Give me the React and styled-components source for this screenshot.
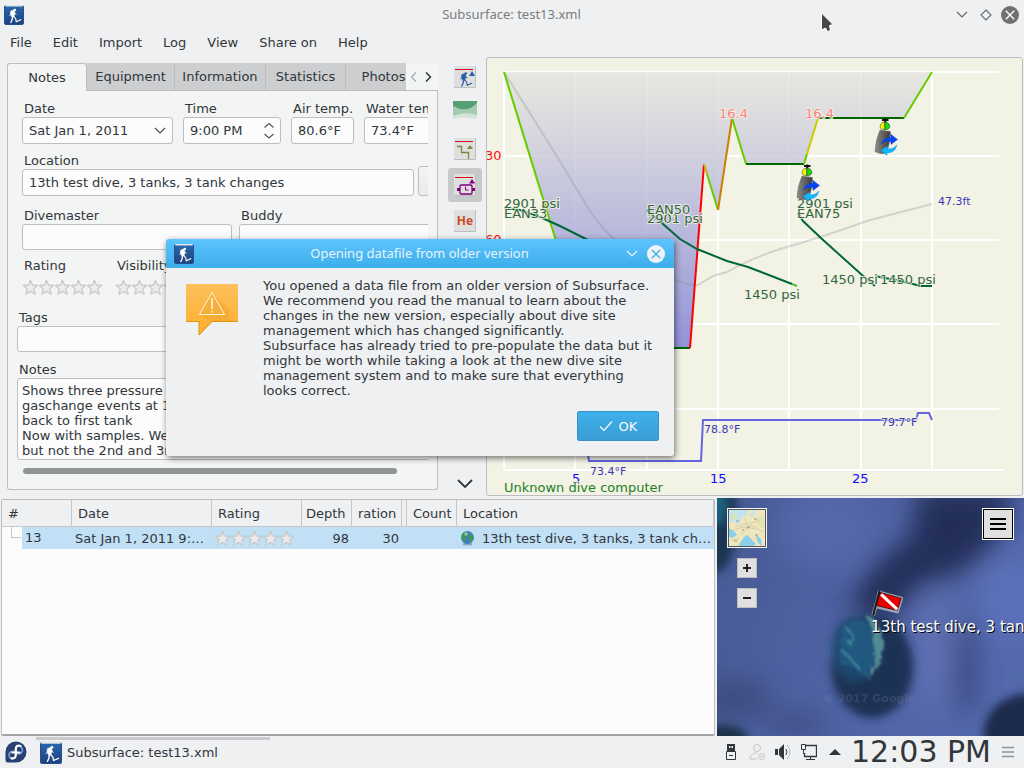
import React from "react";
import styled, { createGlobalStyle } from "styled-components";

const Global = createGlobalStyle`
  * { box-sizing: border-box; }
  body {
    margin: 0;
    background: #eff0f1;
    color: #31363b;
    font: 13px/15px "DejaVu Sans", Verdana, sans-serif;
  }
  button, input, select, textarea { font: inherit; color: inherit; }
`;

/* ---------- page frame ---------- */
const Page = styled.div`
  position: relative;
  display: flex;
  flex-direction: column;
  min-height: 100vh;
  overflow: hidden;
`;
const TitleBar = styled.header`
  display: flex;
  align-items: center;
  gap: 6px;
  height: 29px;
  padding: 0 5px 0 4px;
`;
const TitleText = styled.h1`
  flex: 1;
  margin: 0;
  padding: 0 0 2px 46px;
  text-align: center;
  font: 13px/18px "Noto Sans", sans-serif;
  color: ${(p) => p.$color || "#7b7d80"};
`;
const IconButton = styled.button`
  display: flex;
  align-items: center;
  justify-content: center;
  width: 18px;
  height: 18px;
  padding: 0;
  border: 0;
  background: none;
`;
const MenuBar = styled.nav`
  display: flex;
  gap: 1px;
  height: 28px;
`;
const MenuItem = styled.button`
  padding: 0 10px 2px;
  border: 0;
  background: none;
`;
const Upper = styled.main`
  display: flex;
  align-items: stretch;
  padding-right: 1px;
`;
const Lower = styled.section`
  flex: 1;
  display: grid;
  grid-template-columns: minmax(0, 7fr) minmax(0, 3fr);
  margin-top: 2px;
`;

/* ---------- notes panel ---------- */
const NotesPanel = styled.section`
  flex: 0 0 431px;
  min-width: 0;
  width: 431px;
  display: flex;
  flex-direction: column;
  margin: 6px 0 6px 7px;
`;
const TabBar = styled.div`
  display: flex;
  height: 28px;
`;
const TabStrip = styled.div`
  flex: 1;
  min-width: 0;
  display: flex;
  overflow: hidden;
`;
const Tab = styled.button`
  flex: 0 0 ${(p) => p.$w}px;
  padding: 0;
  border: 1px solid #bcbebf;
  border-width: ${(p) => (p.$active ? "1px 1px 0 1px" : "0 1px 1px 0")};
  border-radius: ${(p) => (p.$active ? "3px 3px 0 0" : "0")};
  background: ${(p) => (p.$active ? "#f3f5f4" : "#cdced0")};
`;
const TabScroll = styled.div`
  display: flex;
  align-items: center;
  justify-content: flex-start;
  width: 32px;
  background: #f3f5f4;
  border-bottom: 1px solid #bcbebf;
`;
const ArrowButton = styled(IconButton)`
  width: 15px;
`;
const Pane = styled.div`
  flex: 1;
  min-width: 0;
  border: 1px solid #bcbebf;
  border-top: 0;
  border-radius: 0 0 3px 3px;
  background: #f3f5f4;
  padding: 10px 9px 14px 9px;
`;
const Form = styled.form`
  overflow: hidden;
  display: flex;
  flex-direction: column;
`;
const FormRow = styled.div`
  display: flex;
  align-items: flex-end;
  gap: ${(p) => p.$gap || 10}px;
  margin-top: ${(p) => p.$top || 0}px;
  padding-left: ${(p) => (p.$flush ? 0 : 5)}px;
`;
const Field = styled.label`
  flex: 0 0 ${(p) => p.$w}px;
  display: flex;
  flex-direction: column;
`;
const Caption = styled.span`
  height: 16px;
  padding-left: 2px;
  white-space: nowrap;
`;
const Box = styled.span`
  display: flex;
  align-items: center;
  height: ${(p) => p.$h || 27}px;
  padding: 0 6px;
  border: 1px solid #bcbebf;
  border-radius: 3px;
  background: #fcfcfc;
`;
const TextInput = styled.input`
  flex: 1;
  min-width: 0;
  width: 100%;
  padding: 0;
  border: 0;
  outline: 0;
  background: none;
`;
const Select = styled.select`
  flex: 1;
  min-width: 0;
  padding: 0;
  border: 0;
  appearance: none;
  background: none;
`;
const NotesArea = styled.textarea`
  height: 82px;
  padding: 4px 4px 0;
  border: 1px solid #bcbebf;
  border-radius: 3px;
  background: #fcfcfc;
  line-height: 15px;
  white-space: pre;
  overflow: hidden;
  resize: none;
  display: block;
`;
const EditButton = styled.button`
  flex: 0 0 30px;
  height: 30px;
  border: 1px solid #bcbebf;
  border-radius: 3px;
  background: linear-gradient(#f3f4f4, #e9eaeb);
`;
const StarBox = styled.span`
  display: flex;
  padding-top: 5px;
`;
const ScrollThumb = styled.div`
  width: 374px;
  height: 6px;
  margin: 8px 0 0 6px;
  border-radius: 3px;
  background: #919497;
`;

/* ---------- profile tools ---------- */
const ToolColumn = styled.aside`
  flex: 0 0 48px;
  display: flex;
  flex-direction: column;
  align-items: center;
  gap: 2px;
  padding: 3px 4px 4px 10px;
`;
const ToolButton = styled.button`
  display: flex;
  align-items: center;
  justify-content: center;
  width: 34px;
  height: 34px;
  padding: 0;
  border: 0;
  border-radius: 3px;
  background: ${(p) => (p.$active ? "#c8c9cb" : "none")};
`;
const MoreButton = styled(ToolButton)`
  height: 18px;
  margin-top: auto;
`;
const ProfileBox = styled.section`
  flex: 1;
  min-width: 0;
  border: 1px solid #bcbebf;
  border-radius: 3px;
  background: #f2f2e5;
  svg { display: block; width: 100%; }
`;

/* ---------- dive list ---------- */
const ListBox = styled.div`
  margin: 1px 2px 0 1px;
  border: 1px solid #bcbebf;
  border-bottom: 2px solid #a3a4a6;
  border-radius: 2px;
  background: #fcfcfc;
`;
const DiveTable = styled.table`
  width: 100%;
  table-layout: fixed;
  border-collapse: separate;
  border-spacing: 0;
`;
const Th = styled.th`
  height: 27px;
  padding: 0 0 0 ${(p) => p.$pad ?? 6}px;
  border-right: 1px solid #c6c7c9;
  border-bottom: 1px solid #c6c7c9;
  background: #eff0f1;
  font-weight: normal;
  text-align: left;
  white-space: nowrap;
  overflow: hidden;
`;
const Td = styled.td`
  height: 22px;
  padding: 0 ${(p) => p.$end ?? 3}px 0 ${(p) => p.$pad ?? 3}px;
  background: ${(p) => (p.$plain ? "none" : "#c1dff5")};
  text-align: ${(p) => p.$align || "left"};
  white-space: nowrap;
  overflow: hidden;
  text-overflow: ellipsis;
`;
const TreeCell = styled.div`
  display: flex;
  height: 22px;
  line-height: 22px;
`;
const Branch = styled.span`
  width: 10px;
  height: 11px;
  margin-left: 9px;
  border: 1px solid #c3c4c6;
  border-width: 0 0 1px 1px;
`;
const DiveNumber = styled.span`
  flex: 1;
  margin-left: 1px;
  padding-left: 3px;
  background: #c1dff5;
`;
const Place = styled.div`
  display: flex;
  align-items: center;
  gap: 7px;
  svg { flex: none; }
`;
const PlaceName = styled.span`
  overflow: hidden;
  text-overflow: ellipsis;
`;

/* ---------- map ---------- */
const MapBox = styled.section`
  position: relative;
  display: flex;
  justify-content: space-between;
  align-items: flex-start;
  padding: 10px;
  overflow: hidden;
  background: #50629f;
`;
const MapPicture = styled.svg`
  position: absolute;
  inset: 0;
  width: 100%;
  height: 100%;
`;
const MapTools = styled.div`
  position: relative;
  display: flex;
  flex-direction: column;
  align-items: center;
  gap: 10px;
`;
const MapThumb = styled.button`
  width: 40px;
  height: 40px;
  padding: 1px;
  border: 1px solid #f4f4f4;
  background: #555;
  svg { display: block; }
`;
const ZoomButton = styled.button`
  display: flex;
  align-items: center;
  justify-content: center;
  width: 20px;
  height: 20px;
  padding: 0;
  border: 1px solid #bdbdbd;
  background: #e0e0e0;
`;
const MapMenu = styled(ZoomButton)`
  position: relative;
  width: 30px;
  height: 30px;
  margin: 1px;
  border: 1px solid #000;
  outline: 1px solid #fff;
`;

/* ---------- dialog ---------- */
const Dialog = styled.div`
  position: absolute;
  left: 166px;
  top: 239px;
  width: 508px;
  border-radius: 3px;
  background: #eff0f1;
  box-shadow: 1px 2px 6px rgba(0, 0, 0, 0.55);
`;
const DialogTitle = styled.div`
  display: flex;
  align-items: center;
  gap: 6px;
  height: 29px;
  padding: 0 9px 0 8px;
  border-radius: 3px 3px 0 0;
  background: linear-gradient(#5cc4ff, #3daee9);
`;
const DialogHeading = styled(TitleText)`
  padding-left: 22px;
`;
const DialogBody = styled.div`
  display: flex;
  gap: 25px;
  padding: 10px 15px 0 20px;
`;
const BubbleSlot = styled.div`
  padding-top: 6px;
`;
const Message = styled.p`
  flex: 1;
  margin: 0;
`;
const DialogButtons = styled.div`
  display: flex;
  justify-content: flex-end;
  padding: 13px 15px 15px;
`;
const OkButton = styled.button`
  display: flex;
  align-items: center;
  justify-content: center;
  gap: 6px;
  width: 82px;
  height: 30px;
  border: 1px solid #3693c8;
  border-radius: 2px;
  background: linear-gradient(#3fb0ec, #3a9dd4);
  color: #fcfcfc;
`;

/* ---------- taskbar ---------- */
const TaskBar = styled.footer`
  display: flex;
  align-items: center;
  height: 32px;
  padding: 0 10px 0 5px;
  background: #eff0f2;
`;
const TaskButton = styled.button`
  display: flex;
  align-items: center;
  gap: 5px;
  width: 234px;
  height: 32px;
  margin-left: 9px;
  padding: 0 4px;
  border: 1px solid transparent;
  border-width: 1px 0 0;
  background: linear-gradient(#c9cacd 3px, transparent 3px) padding-box;
`;
const Tray = styled.div`
  display: flex;
  align-items: center;
  gap: 10px;
  margin-left: auto;
`;
const Clock = styled.time`
  margin: 0 11px 0 8px;
  font-size: 30px;
  line-height: 32px;
`;
const Cursor = styled.svg`
  position: absolute;
  left: 820px;
  top: 12px;
  pointer-events: none;
`;

/* ---------- drawings ---------- */
const Figure = ({ color }) => (
  <g fill="none" stroke={color} strokeLinecap="round" strokeLinejoin="round">
    <circle cx="10.8" cy="5" r="1.3" fill={color} stroke="none" />
    <path d="M7 6 L9.5 5 L11 8 L9.8 12 L7.6 11.5 L6.5 8.5 Z" fill={color} strokeWidth=".6" />
    <path d="M10 7 L12 9.5 M7.5 8 L5.8 10.5" strokeWidth=".9" />
    <path d="M8.4 11 L8.2 14.5 L6.8 17.5" strokeWidth="1.3" />
    <path d="M9.4 11 L11.8 14 L12.3 16.8 L16.8 14.8" strokeWidth="1.2" />
  </g>
);

const AppIcon = ({ size = 20 }) => (
  <svg width={size} height={size} viewBox="0 0 20 20" aria-hidden="true">
    <defs>
      <linearGradient id="appBlue" x1="0" y1="0" x2="0" y2="1">
        <stop offset="0" stopColor="#2b67ac" />
        <stop offset="1" stopColor="#1d4180" />
      </linearGradient>
    </defs>
    <rect x=".5" y=".5" width="19" height="19" rx="1.5" fill="url(#appBlue)" stroke="#24508f" />
    <rect x="1" y="0" width="18" height="1.6" rx=".8" fill="#dfe6e6" />
    <Figure color="#fff" />
  </svg>
);

const Chevron = ({ w = 12, h = 7, color = "#4d5256", stroke = 1.2 }) => (
  <svg width={w} height={h} viewBox={`0 0 ${w} ${h}`} fill="none" stroke={color} strokeWidth={stroke}>
    <path d={`M1 1 L${w / 2} ${h - 1} L${w - 1} 1`} />
  </svg>
);

const CloseIcon = ({ disc, cross }) => (
  <svg width="18" height="18" viewBox="0 0 18 18">
    <circle cx="9" cy="9" r="9" fill={disc} />
    <path d="M4.8 4.8 L13.2 13.2 M13.2 4.8 L4.8 13.2" stroke={cross} strokeWidth="1.3" />
  </svg>
);

const Stars = ({ label }) => (
  <svg width="81" height="17" viewBox="0 0 81 17" role="img" aria-label={label}>
    {[0, 1, 2, 3, 4].map((i) => (
      <path
        key={i}
        transform={`translate(${i * 16} 0)`}
        d="M8.5 1.3 L10.4 6 L15.8 6.3 L11.8 9.8 L13.2 15.3 L8.5 12.4 L3.8 15.3 L5.2 9.8 L1.2 6.3 L6.6 6 Z"
        fill="#ececec"
        stroke="#cacaca"
        strokeWidth="1.3"
        strokeLinejoin="round"
      />
    ))}
  </svg>
);

const ToolFrame = ({ children }) => (
  <svg width="24" height="24" viewBox="0 0 24 24">
    <rect x="1" y="1" width="22" height="22" fill="#dfdfdf" />
    <path d="M1.5 22.5 H22.5 V1" fill="none" stroke="#bdbdbd" />
    {children}
  </svg>
);
const RedLine = () => <rect x="2" y="4" width="18" height="1" fill="#d4001c" />;

const Tank = ({ dx = 0, dy = 0 }) => (
  <g transform={`translate(${dx} ${dy})`}>
    <path d="M802 176 L812.5 177.5 Q812 190 808.5 199 Q803 201 797 197.5 Q797.500 186 802 176Z" fill="url(#steel)" stroke="#777" strokeWidth=".6" />
    <path d="M804 166 H810.500 M807.300 164.500 V169" stroke="#111" strokeWidth="2" />
    <path d="M806.800 168 A4.700 4.700 0 0 0 802.200 173.500 Q803 176 806.800 175.500Z" fill="#f5f500" stroke="#222" strokeWidth=".5" />
    <path d="M806.800 168 A4.700 4.700 0 0 1 811.700 173.500 Q811 176 806.800 175.500Z" fill="#12dd12" stroke="#222" strokeWidth=".5" />
    <path d="M803 190 Q806 182.500 813 183.500 L812.500 180 L819.500 185.500 L813 190.500 L812.800 187.500 Q807 186 803 190Z" fill="#0646f2" stroke="#053ac0" strokeWidth=".4" />
    <path d="M819 191 Q817 199 809 199 L809 201.500 L803 196.500 L809.500 192 L809.800 195 Q815 195.500 819 191Z" fill="#12b6fa" stroke="#0b88dc" strokeWidth=".4" />
  </g>
);

const profilePoints =
  "504,72 589,348 690,348 704,164 718,210 732,118 746,164 804,164 818,118 904,118 932,72";
const segments = [
  ["504,72 589,348", "#66cc00"],
  ["589,348 690,348", "#006600"],
  ["690,348 704,164", "#ff0000"],
  ["704,164 707,174", "#ccb000"],
  ["707,174 718,210", "#66cc00"],
  ["718,210 732,118", "#cc8000"],
  ["732,118 746,164", "#66cc00"],
  ["746,164 804,164", "#006600"],
  ["804,164 807,154", "#66cc00"],
  ["807,154 818,118", "#cccc00"],
  ["818,118 904,118", "#006600"],
  ["904,118 932,72", "#66cc00"],
];
const pressureLines = [
  "504,208 520,210 540,217 560,226 586,239 640,262",
  "647,210 663,224 680,239 697,249 727,261 748,267 792,284",
  "798,213 803,221 822,239 862,275 875,286",
  "875,276 900,281 913,284 920,286 932,286",
];
const chartTexts = [
  [504, 208, "2901 psi", "gas"],
  [504, 218, "EAN33", "gas"],
  [647, 223, "2901 psi", "gas"],
  [647, 214, "EAN50", "gas"],
  [797, 208, "2901 psi", "gas"],
  [797, 218, "EAN75", "gas"],
  [744, 299, "1450 psi", "gas"],
  [822, 284, "1450 psi", "gas"],
  [880, 284, "1450 psi", "gas"],
  [719, 118, "16.4", "depth"],
  [805, 118, "16.4", "depth"],
  [938, 205, "47.3ft", "small"],
  [590, 475, "73.4°F", "small"],
  [704, 433, "78.8°F", "small"],
  [881, 426, "79.7°F", "small"],
  [485, 160, "30", "axisY"],
  [485, 244, "60", "axisY"],
  [572, 483, "5", "axisX"],
  [710, 483, "15", "axisX"],
  [852, 483, "25", "axisX"],
  [504, 492, "Unknown dive computer", "computer"],
];
const inks = {
  gas: "#33663d",
  depth: "#ff8080",
  small: "#3a3ab4",
  axisY: "#ff1010",
  axisX: "#0a0aff",
  computer: "#1c801c",
};
const ChartText = styled.text`
  font-size: ${(p) => (p.$kind === "small" ? 11 : 13)}px;
  fill: ${(p) => inks[p.$kind]};
  stroke: #f2f2e5;
  stroke-width: 2px;
  stroke-opacity: 0.8;
  paint-order: stroke;
`;

const Profile = () => (
  <svg viewBox="487 58 535 437" role="img" aria-label="Dive profile">
    <defs>
      <linearGradient id="water" x1="0" y1="0" x2="0" y2="1">
        <stop offset="0" stopColor="#e4e4df" stopOpacity=".75" />
        <stop offset=".3" stopColor="#c8c8dc" stopOpacity=".8" />
        <stop offset="1" stopColor="#8383d8" stopOpacity=".87" />
      </linearGradient>
      <linearGradient id="steel">
        <stop offset="0" stopColor="#8d8d8d" />
        <stop offset=".4" stopColor="#6b6b6b" />
        <stop offset="1" stopColor="#3a3a3a" />
      </linearGradient>
    </defs>
    <g stroke="#fff" strokeWidth="2">
      {[72, 156, 240, 324, 409].map((y) => <path key={y} d={`M504 ${y} H999`} />)}
      <path d="M504 470 H1004" />
      {[504, 575, 647, 718, 789, 861, 932].map((x) => <path key={x} d={`M${x} 72 V470`} />)}
    </g>
    <polygon points={profilePoints} fill="url(#water)" />
    <path
      d="M504 72 L553 150 L590 211 Q602 228 613 238 Q645 272 672 278 Q686 286 698 285 L713 276 L727 272 Q750 259 780 249 Q820 238 867 221 Q900 212 932 204"
      fill="none" stroke="#808080" strokeOpacity=".27" strokeWidth="2"
    />
    {segments.map(([pts, color]) => (
      <polyline key={pts} points={pts} fill="none" stroke={color} strokeWidth="2" />
    ))}
    {pressureLines.map((pts) => (
      <polyline key={pts} points={pts} fill="none" stroke="#006838" strokeWidth="2" />
    ))}
    <path d="M792 284 L797 286" stroke="#55c030" strokeWidth="2" />
    <path d="M586 440 L589 461 H701 L703 420 H916 L918 413 H929 L932 420" fill="none" stroke="#6565e2" strokeWidth="2" />
    {chartTexts.map(([x, y, text, kind]) => (
      <ChartText key={`${x}-${y}`} x={x} y={y} $kind={kind}>{text}</ChartText>
    ))}
    <Tank />
    <Tank dx={78} dy={-46} />
  </svg>
);

const MapLabel = styled.text`
  font-size: 15px;
  fill: ${(p) => p.$fill};
`;
const Watermark = styled.text`
  font-size: 11px;
  font-weight: bold;
  fill: #8a92a8;
  opacity: 0.2;
`;

const Satellite = () => (
  <MapPicture viewBox="0 0 307 237" preserveAspectRatio="xMidYMid slice" role="img" aria-label="Dive site map">
    <defs>
      <linearGradient id="sea" x1="0" y1="0" x2="1" y2=".3">
        <stop offset="0" stopColor="#465a93" />
        <stop offset=".4" stopColor="#4d60a0" />
        <stop offset="1" stopColor="#5468ac" />
      </linearGradient>
      <filter id="soft" x="-50%" y="-50%" width="200%" height="200%"><feGaussianBlur stdDeviation="13" /></filter>
      <filter id="edge" x="-30%" y="-30%" width="160%" height="160%"><feGaussianBlur stdDeviation="4" /></filter>
      <filter id="reef" x="-10%" y="-10%" width="120%" height="120%">
        <feTurbulence type="fractalNoise" baseFrequency=".13" numOctaves="3" seed="4" />
        <feDisplacementMap in="SourceGraphic" scale="9" />
        <feGaussianBlur stdDeviation="1.2" />
      </filter>
    </defs>
    <rect width="307" height="237" fill="url(#sea)" />
    <g filter="url(#soft)">
      <ellipse cx="110" cy="30" rx="50" ry="40" fill="#5468aa" />
      <ellipse cx="218" cy="150" rx="20" ry="60" fill="#5f70b2" />
      <ellipse cx="293" cy="100" rx="30" ry="40" fill="#5b71bb" />
      <path d="M200 -10 L300 -10 L275 50 L240 75 L200 90 L170 125 L130 110 L160 62 L195 38Z" fill="#212f58" />
      <ellipse cx="248" cy="170" rx="11" ry="50" fill="#36457c" />
      <ellipse cx="15" cy="200" rx="40" ry="22" fill="#3c4d80" />
      <ellipse cx="80" cy="225" rx="30" ry="12" fill="#3c4d84" />
    </g>
    <g filter="url(#edge)">
      <ellipse cx="0" cy="20" rx="21" ry="54" fill="#1b3453" />
      <ellipse cx="0" cy="5" rx="10" ry="22" fill="#1f6480" />
      <ellipse cx="310" cy="235" rx="44" ry="40" fill="#1c2a4c" />
      <ellipse cx="5" cy="240" rx="26" ry="14" fill="#1d3048" />
      <ellipse cx="155" cy="168" rx="41" ry="51" fill="#1e3055" />
      <ellipse cx="138" cy="150" rx="23" ry="32" fill="#1f4a6e" />
    </g>
    <g filter="url(#reef)">
      <path d="M135 123 Q155 116 160 140 Q162 165 148 178 Q140 168 124 165 Q118 140 135 123Z" fill="#24628a" opacity=".6" />
      <path d="M152 117 Q164 122 166 145 Q165 170 151 182 Q159 160 157 142 Q155 126 149 119Z" fill="#5e979c" opacity=".85" />
      <path d="M123 150 L135 161 L142 171 M128 128 L136 137 L131 146" stroke="#4790a2" strokeWidth="1.5" fill="none" />
    </g>
    <Watermark x="106" y="203">© 2017 Google</Watermark>
    <g stroke="#d8d8d8" strokeWidth="3.500" strokeLinejoin="round" opacity=".65" fill="none">
      <path d="M163 92 L156 117 M162 94 L184 100 L180 113 L159 108Z" />
    </g>
    <path d="M163 94 L184 100 L180 112 L159 107Z" fill="#e80000" stroke="#3a0808" strokeWidth=".8" />
    <path d="M164 96 L180 111" stroke="#fff" strokeWidth="3" />
    <path d="M162.500 92 L156 117" stroke="#171717" strokeWidth="2" />
    <MapLabel x="155" y="134" $fill="#000" aria-hidden="true">13th test dive, 3 tanks, 3 tank changes</MapLabel>
    <MapLabel x="154" y="133" $fill="#fff">13th test dive, 3 tanks, 3 tank changes</MapLabel>
  </MapPicture>
);

const StreetThumb = () => (
  <svg width="36" height="36" viewBox="0 0 36 36">
    <rect width="36" height="36" fill="#eee6bd" />
    <path d="M0 0 H20 L17 6 L13 7 L11 12 L7 15 L6 11 L0 13Z M28 0 L24 6 L20 7 L22 3 L25 0Z" fill="#c5e3ee" />
    <path d="M0 18 L5 21 L8 25 L3 28 L0 27Z M11 33 L15 27 L19 25 L22 29 L27 34 L24 36 H10Z M26 24 L32 29 L33 36 L29 33Z" fill="#8ccfeb" />
    <path d="M3 5 L7 3 L8 9 L4 10Z M27 8 L35 5 V18 L29 15Z" fill="#dfe3b2" />
    <path d="M6 17 L30 11 M12 24 L22 15 L34 22 M16 8 L19 20 M2 30 L10 29 M4 20 L15 17 L27 19" stroke="#cfbf97" strokeWidth=".6" fill="none" />
    <path d="M7 11 H10 M18 17 H21 M25 9 H28 M13 20 H15 M5 31 H8 M26 25 H29" stroke="#888" strokeWidth=".8" />
  </svg>
);

const Globe = () => (
  <svg width="15" height="16" viewBox="0 0 15 16" aria-hidden="true">
    <ellipse cx="7.500" cy="14" rx="5" ry="1.500" fill="#8fa7b8" />
    <circle cx="7.500" cy="7.500" r="6.500" fill="#3f7fc0" />
    <path d="M3 3 Q7 1 8 3 L7 6 L5 8 L6 11 L4 12 Q1 9 2 5Z M9 6 L12 4 Q14 7 13 10 L10 12 L9 9Z" fill="#3f9a4c" />
    <circle cx="6" cy="4" r="1.800" fill="#fff" opacity=".45" />
  </svg>
);

const Bubble = () => (
  <svg width="52" height="52" viewBox="0 0 52 52" aria-hidden="true">
    <defs>
      <linearGradient id="amber" x1="0" y1="0" x2="0" y2="1">
        <stop offset="0" stopColor="#fdc05c" />
        <stop offset="1" stopColor="#fdae2c" />
      </linearGradient>
    </defs>
    <path d="M0 0 H52 V38 H26 L13 51 V38 H0Z" fill="url(#amber)" />
    <path d="M26 8 L43 25 V38 H26 L14 31Z" fill="#e89a22" opacity=".3" />
    <path d="M0 37.500 H13 V51 M52 37.500 H26 L13 51" fill="none" stroke="#e5940f" />
    <path d="M26 8.500 L38.500 30.500 H13.500Z" fill="none" stroke="#fff4d8" />
    <path d="M26 14 V25 M26 26.500 V28.500" stroke="#fff4d8" strokeWidth="1.600" />
  </svg>
);

const Fedora = () => (
  <svg width="22" height="22" viewBox="0 0 22 22" aria-hidden="true">
    <path d="M11 .5 A10.500 10.500 0 1 1 11 21.500 H3 Q.5 21.500 .5 19 V11 A10.500 10.500 0 0 1 11 .5Z" fill="#294172" />
    <path d="M12 12.500 Q17 13.500 17.500 9 Q17.500 7 15.500 5.500 M9.500 10.500 Q4.500 10 4 14 Q4.500 18 8 17.500" fill="none" stroke="#6d9bd8" strokeWidth="1.800" />
    <path d="M15.500 5 Q11 3.500 10.800 8 V14 Q10.500 18 6.500 17.300 M7.500 11.500 H14.500" fill="none" stroke="#fff" strokeWidth="2.200" strokeLinecap="round" />
  </svg>
);

const tabs = [["Notes", 80], ["Equipment", 88], ["Information", 91], ["Statistics", 80], ["Photos", 76]];
const menus = ["File", "Edit", "Import", "Log", "View", "Share on", "Help"];
const notes = `Shows three pressure graphs with
gaschange events at 10 and 20 min
back to first tank
Now with samples. We have the first
but not the 2nd and 3rd tank`;

export default function App() {
  return (
    <Page>
      <Global />
      <TitleBar>
        <AppIcon />
        <TitleText>Subsurface: test13.xml</TitleText>
        <IconButton aria-label="Minimize"><Chevron color="#65686b" /></IconButton>
        <IconButton aria-label="Maximize">
          <svg width="12" height="12" viewBox="0 0 12 12"><path d="M6 1 L11 6 L6 11 L1 6Z" fill="none" stroke="#65686b" strokeWidth="1.100" /></svg>
        </IconButton>
        <IconButton aria-label="Close"><CloseIcon disc="#6f7172" cross="#fff" /></IconButton>
      </TitleBar>
      <MenuBar>{menus.map((m) => <MenuItem key={m}>{m}</MenuItem>)}</MenuBar>

      <Upper>
        <NotesPanel>
          <TabBar>
            <TabStrip role="tablist">
              {tabs.map(([name, w], i) => (
                <Tab key={name} role="tab" aria-selected={i === 0} $active={i === 0} $w={w}>{name}</Tab>
              ))}
            </TabStrip>
            <TabScroll>
              <ArrowButton aria-label="Previous tabs">
                <svg width="7" height="12" viewBox="0 0 7 12"><path d="M6 1.500 L1.500 6 L6 10.500" fill="none" stroke="#a6a8aa" strokeWidth="1.200" /></svg>
              </ArrowButton>
              <ArrowButton aria-label="Next tabs">
                <svg width="7" height="12" viewBox="0 0 7 12"><path d="M1 1.500 L5.500 6 L1 10.500" fill="none" stroke="#31363b" strokeWidth="1.500" /></svg>
              </ArrowButton>
            </TabScroll>
          </TabBar>
          <Pane>
            <Form>
              <FormRow>
                <Field $w={151}>
                  <Caption>Date</Caption>
                  <Box>
                    <Select defaultValue="d"><option value="d">Sat Jan 1, 2011</option></Select>
                    <Chevron />
                  </Box>
                </Field>
                <Field $w={98}>
                  <Caption>Time</Caption>
                  <Box>
                    <TextInput defaultValue="9:00 PM" />
                    <svg width="10" height="18" viewBox="0 0 10 18" fill="none" stroke="#4d5256" strokeWidth="1.100"><path d="M.5 5.500 L5 1.500 L9.500 5.500 M.5 12 L5 16 L9.500 12" /></svg>
                  </Box>
                </Field>
                <Field $w={63}>
                  <Caption>Air temp.</Caption>
                  <Box><TextInput defaultValue="80.6°F" /></Box>
                </Field>
                <Field $w={90}>
                  <Caption>Water temp.</Caption>
                  <Box><TextInput defaultValue="73.4°F" /></Box>
                </Field>
              </FormRow>
              <FormRow $top={9} $gap={4}>
                <Field $w={392}>
                  <Caption>Location</Caption>
                  <Box><TextInput defaultValue="13th test dive, 3 tanks, 3 tank changes" /></Box>
                </Field>
                <EditButton type="button" aria-label="Edit location" />
              </FormRow>
              <FormRow $top={12} $gap={7}>
                <Field $w={210}>
                  <Caption>Divemaster</Caption>
                  <Box $h={26}><TextInput /></Box>
                </Field>
                <Field $w={210}>
                  <Caption>Buddy</Caption>
                  <Box $h={26}><TextInput /></Box>
                </Field>
              </FormRow>
              <FormRow $top={8} $gap={12}>
                <Field $w={81} as="div"><Caption>Rating</Caption><StarBox><Stars label="Rating" /></StarBox></Field>
                <Field $w={81} as="div"><Caption>Visibility</Caption><StarBox><Stars label="Visibility" /></StarBox></Field>
              </FormRow>
              <FormRow $top={14} $flush>
                <Field $w={420}>
                  <Caption>Tags</Caption>
                  <Box $h={26}><TextInput /></Box>
                </Field>
              </FormRow>
              <FormRow $top={10} $flush>
                <Field $w={420}>
                  <Caption>Notes</Caption>
                  <NotesArea defaultValue={notes} />
                </Field>
              </FormRow>
            </Form>
            <ScrollThumb />
          </Pane>
        </NotesPanel>

        <ToolColumn>
          <ToolButton aria-label="Show pO2">
            <ToolFrame>
              <RedLine />
              <g transform="translate(2 3.500)"><Figure color="#2d5fa5" /></g>
              <path d="M16 11 H22 L19 6Z" fill="#2d5fa5" />
            </ToolFrame>
          </ToolButton>
          <ToolButton aria-label="Show ceiling">
            <svg width="24" height="24" viewBox="0 0 24 24">
              <path d="M0 0 H24 V17 Q12 14 0 17Z" fill="#a6cbb3" />
              <path d="M0 0 H24 V2 Q14 13 0 5Z" fill="#55a073" />
              <path d="M0 15 Q12 10 24 14 V18 Q12 15 0 18Z" fill="#d3e4d8" />
            </svg>
          </ToolButton>
          <ToolButton aria-label="Show calculated ceiling">
            <ToolFrame>
              <RedLine />
              <path d="M4 9.500 H8.500 V15.500 H15.500 V22" fill="none" stroke="#80883c" strokeWidth="1.300" />
              <path d="M14 12 H20 L17 8Z" fill="#80883c" />
            </ToolFrame>
          </ToolButton>
          <ToolButton $active aria-label="Show dive computer ceiling">
            <ToolFrame>
              <RedLine />
              <path d="M16 10.500 H22 L19 6Z" fill="#800080" />
              <rect x="7" y="12" width="12" height="9" rx="1" fill="none" stroke="#800080" strokeWidth="1.300" />
              <path d="M4 16.500 H7 M19 16.500 H22" stroke="#800080" strokeWidth="3" />
              <path d="M12.500 13.500 V17 H15.500" fill="none" stroke="#800080" />
            </ToolFrame>
          </ToolButton>
          <ToolButton aria-label="Show pHe">
            <ToolFrame>
              <text x="12" y="16" textAnchor="middle" fontFamily="Open Sans, sans-serif" fontWeight="bold" fontSize="12" fill="#cb4a28">He</text>
            </ToolFrame>
          </ToolButton>
          <MoreButton aria-label="More tools"><Chevron w={16} h={9} color="#31363b" stroke={1.8} /></MoreButton>
        </ToolColumn>

        <ProfileBox><Profile /></ProfileBox>
      </Upper>

      <Lower>
        <ListBox>
          <DiveTable>
            <colgroup>
              <col style={{ width: 70 }} /><col style={{ width: 140 }} /><col style={{ width: 90 }} />
              <col style={{ width: 50 }} /><col style={{ width: 50 }} /><col style={{ width: 5 }} />
              <col style={{ width: 50 }} /><col />
            </colgroup>
            <thead>
              <tr>
                <Th>#</Th><Th>Date</Th><Th>Rating</Th><Th $pad={4}>Depth</Th><Th>ration</Th><Th $pad={0} /><Th>Count</Th><Th>Location</Th>
              </tr>
            </thead>
            <tbody>
              <tr>
                <Td $plain $pad={0} $end={0}><TreeCell><Branch /><DiveNumber>13</DiveNumber></TreeCell></Td>
                <Td>Sat Jan 1, 2011 9:00 PM</Td>
                <Td $pad={2}><Place><Stars label="Rating" /></Place></Td>
                <Td $align="right">98</Td>
                <Td $align="right">30</Td>
                <Td />
                <Td />
                <Td $end={0}><Place><Globe /><PlaceName>13th test dive, 3 tanks, 3 tank changes</PlaceName></Place></Td>
              </tr>
            </tbody>
          </DiveTable>
        </ListBox>
        <MapBox>
          <Satellite />
          <MapTools>
            <MapThumb aria-label="Street map"><StreetThumb /></MapThumb>
            <ZoomButton aria-label="Zoom in"><svg width="10" height="10"><path d="M5 1 V9 M1 5 H9" stroke="#222" strokeWidth="2" /></svg></ZoomButton>
            <ZoomButton aria-label="Zoom out"><svg width="10" height="10"><path d="M1 5 H9" stroke="#222" strokeWidth="2" /></svg></ZoomButton>
          </MapTools>
          <MapMenu aria-label="Map menu"><svg width="16" height="12"><path d="M0 1 H16 M0 6 H16 M0 11 H16" stroke="#000" strokeWidth="2" /></svg></MapMenu>
        </MapBox>
      </Lower>

      <TaskBar>
        <Fedora />
        <TaskButton><AppIcon size={22} />Subsurface: test13.xml</TaskButton>
        <Tray>
          <svg width="16" height="18" viewBox="0 0 16 18" fill="#31363b">
            <path d="M4 1 H12 V8 H4Z M6 3 V5 H7.500 V3Z M8.500 3 V5 H10 V3Z" fillRule="evenodd" />
            <path d="M3.500 8.500 H12.500 V16.500 H3.500Z" fill="none" stroke="#31363b" /><path d="M6 12 H10 V13 H6Z" />
          </svg>
          <svg width="16" height="18" viewBox="0 0 16 18" fill="none" stroke="#c4c6c8">
            <circle cx="8" cy="5" r="3.500" /><path d="M1 16 Q1 10 8 10 M1 16 H8" /><circle cx="12.500" cy="13.500" r="3" /><path d="M11 13.500 H14" />
          </svg>
          <svg width="16" height="18" viewBox="0 0 16 18">
            <path d="M0 6 H3 V12 H0Z M4 6 L9 1 V17 L4 12Z" fill="#31363b" />
            <path d="M11 6 Q13 9 11 12" fill="none" stroke="#31363b" /><path d="M12 2 Q18 9 12 16" fill="none" stroke="#b5b8ba" />
          </svg>
          <svg width="16" height="18" viewBox="0 0 16 18" fill="none" stroke="#31363b">
            <path d="M5 2.500 H15.500 V13.500 H3.500 V10" strokeWidth="1.300" /><path d="M.5 1.500 H4.500 V6.500 H.5Z M2.500 6.500 V10.500 H4" /><path d="M9.500 14 V16.500 M5 16.500 H14" />
          </svg>
          <svg width="16" height="18" viewBox="0 0 16 18"><path d="M2 12 L8 6 L14 12Z" fill="#31363b" /></svg>
        </Tray>
        <Clock>12:03 PM</Clock>
        <svg width="12" height="12"><path d="M0 1.500 H12 M0 6 H12 M0 10.500 H12" stroke="#8e9194" strokeWidth="1.500" /></svg>
      </TaskBar>

      <Dialog role="dialog" aria-labelledby="dialog-title">
        <DialogTitle>
          <AppIcon />
          <DialogHeading as="h2" id="dialog-title" $color="#e6f4fc">Opening datafile from older version</DialogHeading>
          <IconButton aria-label="Shade"><Chevron color="#eaf6fd" /></IconButton>
          <IconButton aria-label="Close dialog"><CloseIcon disc="#eff3f5" cross="#3daee9" /></IconButton>
        </DialogTitle>
        <DialogBody>
          <BubbleSlot><Bubble /></BubbleSlot>
          <Message>
            You opened a data file from an older version of Subsurface. We recommend you read the manual to learn
            about the changes in the new version, especially about dive site management which has changed
            significantly.
            <br />
            Subsurface has already tried to pre-populate the data but it might be worth while taking a look at the
            new dive site management system and to make sure that everything looks correct.
          </Message>
        </DialogBody>
        <DialogButtons>
          <OkButton>
            <svg width="14" height="12" viewBox="0 0 14 12"><path d="M1 6.500 L5 10.500 L13 1.500" fill="none" stroke="#fcfcfc" strokeWidth="1.200" /></svg>
            OK
          </OkButton>
        </DialogButtons>
      </Dialog>

      <Cursor width="14" height="22" viewBox="0 0 14 22">
        <path d="M1.500 1 L13 12.500 L9.500 13.500 L10.500 18.500 L7.500 19.500 L5.500 16 L1.500 18Z" fill="#474747" stroke="#fff" strokeWidth="1" />
      </Cursor>
    </Page>
  );
}
